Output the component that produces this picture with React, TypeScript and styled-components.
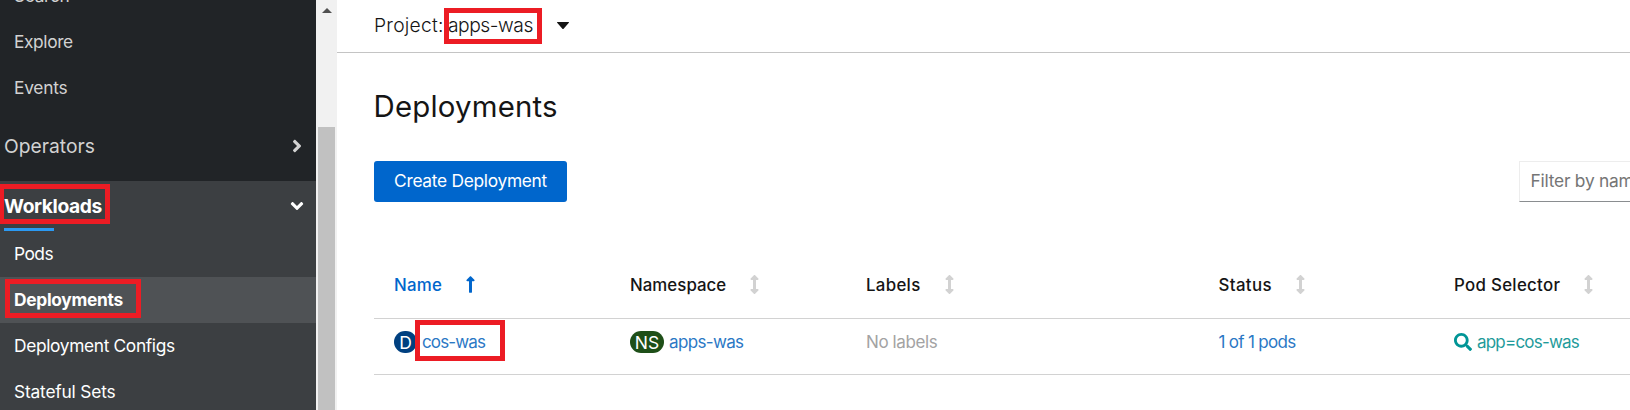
import React from 'react';
import styled, { createGlobalStyle } from 'styled-components';
import {
  FaAngleDown,
  FaAngleRight,
  FaArrowsAltV,
  FaLongArrowAltUp,
  FaSearch,
} from 'react-icons/fa';

const GlobalStyle = createGlobalStyle`
  *, *::before, *::after { box-sizing: border-box; }
  body {
    margin: 0;
    overflow: hidden;
    background: #fff;
    color: #151515;
    font-family: Inter, 'Liberation Sans', sans-serif;
    font-size: 17.33px;
  }
`;

const Page = styled.div`
  display: flex;
  width: 100%;
  height: 410px;
  overflow: hidden;
`;

/* Sidebar */

const Sidebar = styled.nav`
  flex: none;
  display: flex;
  flex-direction: column;
  justify-content: flex-end;
  width: 316px;
  height: 415px;
  background: #212427;
`;

const NavItem = styled.a<{ $active?: boolean; $track: number }>`
  display: flex;
  flex: none;
  align-items: center;
  height: 46px;
  padding: 0 0 2px 14px;
  color: inherit;
  background: ${(p) => (p.$active ? '#4f5255' : 'transparent')};
  font-weight: ${(p) => (p.$active ? 700 : 400)};
  letter-spacing: ${(p) => p.$track}px;
  white-space: nowrap;
`;

const NavGroup = styled.div<{ $open?: boolean }>`
  flex: none;
  color: ${(p) => (p.$open ? '#fff' : '#d2d2d2')};
  background: ${(p) => (p.$open ? '#3c3f42' : 'transparent')};
`;

const GroupHeader = styled.div<{ $open?: boolean; $track: number }>`
  display: flex;
  align-items: center;
  justify-content: space-between;
  height: 50px;
  margin: ${(p) => (p.$open ? '0' : '10px 0')};
  padding: 0 9px 0 4px;
  font-size: 19.26px;
  font-weight: ${(p) => (p.$open ? 700 : 400)};
  letter-spacing: ${(p) => p.$track}px;
`;

const OpenMark = styled.div`
  width: 50px;
  height: 3px;
  margin: -3px 0 0 4px;
  background: #2b9af3;
`;

/* Scrollbar */

const ScrollTrack = styled.div`
  flex: none;
  display: flex;
  flex-direction: column;
  align-items: center;
  justify-content: space-between;
  width: 21px;
  padding-top: 8px;
  background: #f1f1f1;
`;

const ScrollArrow = styled.svg`
  width: 10px;
  height: 5px;
  fill: #505050;
`;

const ScrollThumb = styled.div`
  width: 17px;
  height: 283px;
  background: #c1c1c1;
`;

/* Main area */

const Main = styled.main`
  flex: 1;
  min-width: 0;
`;

const ProjectBar = styled.header`
  display: flex;
  align-items: center;
  height: 53px;
  padding: 0 0 3px 37px;
  border-bottom: 1px solid #c4c4c4;
  font-size: 19.26px;
  font-weight: 300;
  white-space: nowrap;
`;

const ProjectLabel = styled.span`
  width: 74px;
  letter-spacing: 0.24px;
`;

const ProjectName = styled.span`
  width: 109px;
  letter-spacing: -0.46px;
`;

const Caret = styled.svg`
  width: 12px;
  height: 7px;
  margin-top: 2px;
  fill: #151515;
`;

const Title = styled.h1`
  margin: 33px 0 0 36.5px;
  height: 75px;
  font-size: 29.4px;
  line-height: 41px;
  font-weight: 400;
  letter-spacing: 0.2px;
`;

const Toolbar = styled.div`
  display: flex;
  justify-content: space-between;
  height: 41px;
  padding-left: 37px;
`;

const CreateButton = styled.button`
  width: 193px;
  padding: 0 0 2px;
  border: 0;
  border-radius: 3px;
  background: #06c;
  color: #fff;
  font: inherit;
  letter-spacing: -0.29px;
`;

const Filter = styled.div`
  display: flex;
  align-items: center;
  width: 111px;
  padding: 0 0 2px 10.5px;
  border: 1px solid #ededed;
  border-right: 0;
  border-bottom-color: #8a8d90;
  color: #757575;
  letter-spacing: -0.22px;
  white-space: nowrap;
  overflow: hidden;
`;

const Table = styled.div`
  margin: 49px 0 0 37px;
`;

const Row = styled.div<{ $head?: boolean }>`
  display: grid;
  grid-template-columns: 236px 236px 352.5px 235.5px 1fr;
  height: ${(p) => (p.$head ? 68 : 56)}px;
  padding: ${(p) => (p.$head ? '0' : '12px 0 21px')};
  border-bottom: 1px solid #d2d2d2;
`;

const HeadCell = styled.div<{ $sorted?: boolean; $track: number }>`
  display: flex;
  align-items: center;
  gap: 23px;
  padding-left: 20px;
  color: ${(p) => (p.$sorted ? '#06c' : '#151515')};
  font-size: 16.85px;
  font-weight: 500;
  letter-spacing: ${(p) => p.$track}px;
  white-space: nowrap;
`;

const SortIcon = styled.svg<{ $sorted?: boolean }>`
  flex: none;
  width: 11px;
  height: 19px;
  color: ${(p) => (p.$sorted ? '#06c' : '#d2d2d2')};
`;

const Cell = styled.div<{ $tone: 'link' | 'muted' | 'selector'; $track: number }>`
  display: flex;
  align-items: center;
  padding-left: 20px;
  color: ${(p) => ({ link: '#2b78c5', muted: '#a3a3a3', selector: '#1f9b9b' })[p.$tone]};
  font-size: 17px;
  letter-spacing: ${(p) => p.$track}px;
  white-space: nowrap;
`;

const SelectorText = styled.span`
  margin-left: 5px;
`;

const Badge = styled.span<{ $kind: 'deployment' | 'namespace' }>`
  display: flex;
  align-items: center;
  justify-content: center;
  width: ${(p) => (p.$kind === 'deployment' ? 23 : 34)}px;
  height: 22px;
  margin-right: 5px;
  border-radius: 11px;
  background: ${(p) => (p.$kind === 'deployment' ? '#004080' : '#1e4f18')};
  color: #fff;
  font-size: 17.5px;
  letter-spacing: 0;
`;

/* Red outlines drawn over the page */

const Outline = styled.div<{ $x: number; $y: number; $w: number; $h: number }>`
  position: absolute;
  left: ${(p) => p.$x}px;
  top: ${(p) => p.$y}px;
  width: ${(p) => p.$w}px;
  height: ${(p) => p.$h}px;
  border: 5px solid #ec1c24;
`;

const columns = [
  { label: 'Namespace', track: 0.03 },
  { label: 'Labels', track: 0.3 },
  { label: 'Status', track: 0.35 },
  { label: 'Pod Selector', track: 0.3 },
];

export default function App() {
  return (
    <>
      <GlobalStyle />
      <Page>
        <Sidebar>
          <NavGroup>
            <NavItem $track={-0.36}>Search</NavItem>
            <NavItem $track={-0.38}>Explore</NavItem>
            <NavItem $track={-0.24}>Events</NavItem>
          </NavGroup>
          <NavGroup>
            <GroupHeader $track={0}>
              Operators
              <FaAngleRight size={20} />
            </GroupHeader>
          </NavGroup>
          <NavGroup $open>
            <GroupHeader $open $track={-0.38}>
              Workloads
              <FaAngleDown size={20} />
            </GroupHeader>
            <OpenMark />
            <NavItem $track={-0.5}>Pods</NavItem>
            <NavItem $active $track={-0.29}>Deployments</NavItem>
            <NavItem $track={-0.34}>Deployment Configs</NavItem>
            <NavItem $track={-0.18}>Stateful Sets</NavItem>
          </NavGroup>
        </Sidebar>
        <ScrollTrack>
          <ScrollArrow viewBox="0 0 10 5">
            <path d="M0 5 5 0l5 5z" />
          </ScrollArrow>
          <ScrollThumb />
        </ScrollTrack>
        <Main>
          <ProjectBar>
            <ProjectLabel>Project:</ProjectLabel>
            <ProjectName>apps-was</ProjectName>
            <Caret viewBox="0 0 12 7">
              <path d="M.5 0h11a.5.5 0 0 1 .35.85L6.6 6.7a.8.8 0 0 1-1.2 0L.15.85A.5.5 0 0 1 .5 0z" />
            </Caret>
          </ProjectBar>
          <Title>Deployments</Title>
          <Toolbar>
            <CreateButton>Create Deployment</CreateButton>
            <Filter>Filter by name...</Filter>
          </Toolbar>
          <Table>
            <Row $head>
              <HeadCell $sorted $track={0.25}>
                Name
                <SortIcon as={FaLongArrowAltUp} $sorted />
              </HeadCell>
              {columns.map((c) => (
                <HeadCell key={c.label} $track={c.track}>
                  {c.label}
                  <SortIcon as={FaArrowsAltV} />
                </HeadCell>
              ))}
            </Row>
            <Row>
              <Cell $tone="link" $track={-0.87}>
                <Badge $kind="deployment">D</Badge>
                cos-was
              </Cell>
              <Cell $tone="link" $track={-0.65}>
                <Badge $kind="namespace">NS</Badge>
                apps-was
              </Cell>
              <Cell $tone="muted" $track={-0.4}>No labels</Cell>
              <Cell $tone="link" $track={-0.7}>1 of 1 pods</Cell>
              <Cell $tone="selector" $track={-0.8}>
                <FaSearch size={18} color="#009596" />
                <SelectorText>app=cos-was</SelectorText>
              </Cell>
            </Row>
          </Table>
        </Main>
      </Page>
      <Outline $x={-1} $y={184} $w={111} $h={40} />
      <Outline $x={5} $y={279} $w={136} $h={39} />
      <Outline $x={444} $y={8} $w={98} $h={36} />
      <Outline $x={415} $y={320} $w={90} $h={41} />
    </>
  );
}
